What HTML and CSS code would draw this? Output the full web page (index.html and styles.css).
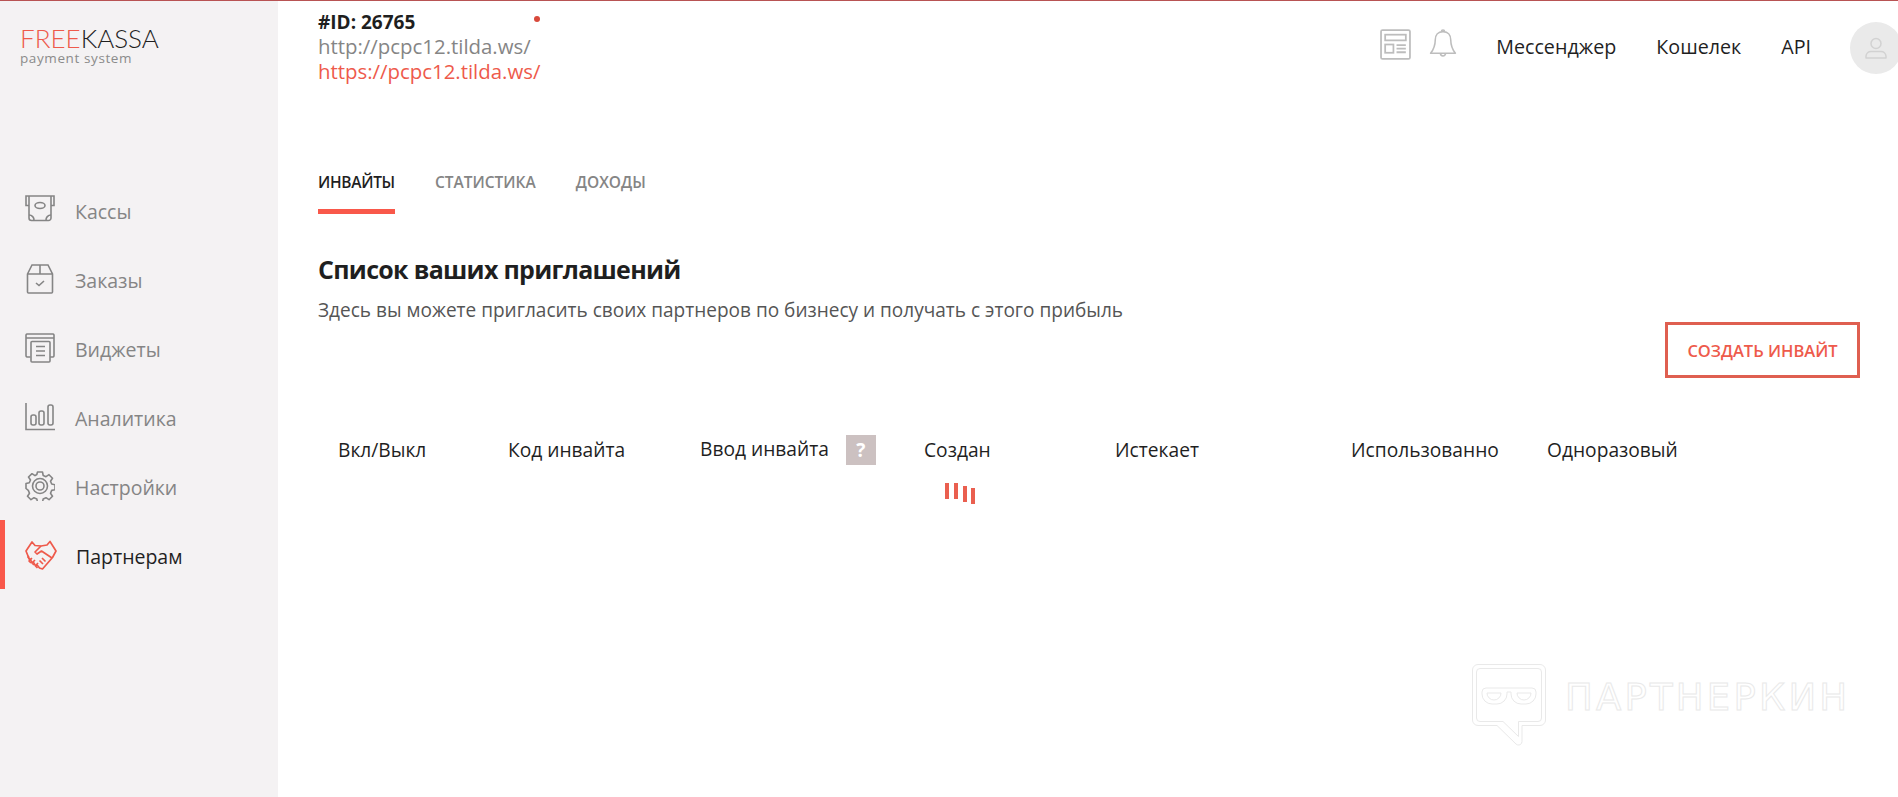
FILE: index.html
```html
<!DOCTYPE html>
<html lang="ru">
<head>
<meta charset="utf-8">
<title>FreeKassa</title>
<link rel="stylesheet" href="styles.css">
</head>
<body>
<div class="app">
  <aside class="sidebar">
    <div class="logo">
      <div class="logo-name"><span class="logo-free">FREE</span>KASSA</div>
      <div class="logo-sub">payment system</div>
    </div>
    <nav class="nav">
      <a class="nav-item">
        <svg class="nav-icon" viewBox="0 0 30 30" fill="none" stroke="#858585" stroke-width="1.6"><path d="M1 5V1h28v4M1 1v9.500h3M29 1v9.500h-3M4 1v22a2.500 2.500 0 0 0 2.500 2.500h17A2.500 2.500 0 0 0 26 23V1"/><ellipse cx="15" cy="10.500" rx="5" ry="3"/><path d="M4 20a5 5 0 0 1 5 5.500M26 20a5 5 0 0 0-5 5.500"/></svg>
        <span>Кассы</span>
      </a>
      <a class="nav-item">
        <svg class="nav-icon" viewBox="0 0 30 30" fill="none" stroke="#858585" stroke-width="1.6"><path d="M2.500 10 7 1h16l4.500 9v18a1 1 0 0 1-1 1h-23a1 1 0 0 1-1-1zM2.500 10h25M15 1v9"/><path d="M11 19l3 2.500 5-4.500"/></svg>
        <span>Заказы</span>
      </a>
      <a class="nav-item">
        <svg class="nav-icon" viewBox="0 0 30 30" fill="none" stroke="#858585" stroke-width="1.6"><path d="M5.500 24H2a1.500 1.500 0 0 1-1-1.500V2A1.500 1.500 0 0 1 2 1h26a1.500 1.500 0 0 1 1 1V22.500a1.500 1.500 0 0 1-1 1.500h-3M1 5h28"/><rect x="6" y="8.500" width="19" height="20.500" rx="1"/><path d="M11 13.500h9M11 18h9M11 22.500h9"/></svg>
        <span>Виджеты</span>
      </a>
      <a class="nav-item">
        <svg class="nav-icon" viewBox="0 0 30 30" fill="none" stroke="#858585" stroke-width="1.6"><path d="M1 1v26.500h29"/><rect x="6" y="13" width="5" height="10" rx="2"/><rect x="14" y="9" width="5" height="14" rx="2"/><rect x="23" y="3" width="5" height="20" rx="2"/></svg>
        <span>Аналитика</span>
      </a>
      <a class="nav-item">
        <svg class="nav-icon" viewBox="0 0 30 30" fill="none" stroke="#858585" stroke-width="1.6"><path d="M12.500 1h5l.7 3.500 2.800 1.200 3-2 3.500 3.500-2 3 1.200 2.800 3.300.7v5l-3.300.7-1.200 2.800 2 3-3.500 3.500-3-2-2.800 1.200-.7 3.300h-5l-.7-3.300-2.800-1.200-3 2-3.500-3.500 2-3-1.200-2.800L1 17.500v-5l3.300-.7 1.200-2.800-2-3L7 2.700l3 2 1.800-1.200z" stroke-linejoin="round"/><circle cx="15" cy="15" r="7.500"/><circle cx="15" cy="15" r="4"/></svg>
        <span>Настройки</span>
      </a>
      <a class="nav-item nav-item-active">
        <svg class="nav-icon nav-icon-hands" viewBox="0 0 32 30" fill="none" stroke="#ee5a4b" stroke-width="1.7" stroke-linejoin="round"><path d="M1 11 7 2l3 3.500 6 .5 6-1 3-3.500 6 9.500-3.500 6.500-10 11.500-3-1-2-2.500-2.500-.5-1.500-2.500-2-.5-1-2.500-1.500-1z"/><path d="M16 6 10 12l2 2 4.500-3 10.500 7M4 16l-1 1 2 3M7 18l-3 3 2 2M10 20l-3 3 2 2M13 23l-2.500 3 2 2M20.500 21.500 17 18M18 24l-3.500-3.500"/></svg>
        <span>Партнерам</span>
      </a>
    </nav>
  </aside>

  <main class="main">
    <header class="topbar">
      <div class="site">
        <div class="site-id">#ID: 26765</div>
        <div class="site-http">http://pcpc12.tilda.ws/</div>
        <div class="site-https">https://pcpc12.tilda.ws/</div>
        <span class="site-dot"></span>
      </div>
      <div class="top-right">
        <svg class="news-icon" viewBox="0 0 30 30" fill="none" stroke="#bdbdbd" stroke-width="1.700"><rect x="1" y="1" width="28" height="28" rx="1.500"/><rect x="5" y="5.500" width="20" height="5.500"/><rect x="5" y="15" width="8" height="8"/><path d="M16 15.500h9M16 19h9M16 22.500h9"/></svg>
        <svg class="bell-icon" viewBox="0 0 26 30" fill="none" stroke="#bdbdbd" stroke-width="1.500" stroke-linejoin="round"><path d="M13 3.500c-5 0-7.500 3.500-7.500 8 0 6-1.500 9-4.500 13h24c-3-4-4.500-7-4.500-13 0-4.500-2.500-8-7.500-8z"/><path d="M11.500 3.500a1.500 1.500 0 0 1 3 0M10.500 24.500a2.500 2.500 0 0 0 5 0"/></svg>
        <a class="top-link top-link-first">Мессенджер</a>
        <a class="top-link">Кошелек</a>
        <a class="top-link">API</a>
        <div class="avatar">
          <svg class="avatar-icon" viewBox="0 0 24 24" fill="none" stroke="#d2d2d2" stroke-width="1.500"><circle cx="12" cy="7.500" r="5"/><path d="M2 22v-2a5 5 0 0 1 5-4.500h10a5 5 0 0 1 5 4.500v2z" stroke-linejoin="round"/></svg>
        </div>
      </div>
    </header>

    <div class="tabs">
      <a class="tab tab-active">ИНВАЙТЫ</a>
      <a class="tab">СТАТИСТИКА</a>
      <a class="tab">ДОХОДЫ</a>
    </div>

    <section class="content">
      <h1 class="title">Список ваших приглашений</h1>
      <p class="lead">Здесь вы можете пригласить своих партнеров по бизнесу и получать с этого прибыль</p>
      <div class="actions"><button class="create-btn">СОЗДАТЬ ИНВАЙТ</button></div>
      <div class="thead">
        <div class="th">Вкл/Выкл</div>
        <div class="th">Код инвайта</div>
        <div class="th th-help"><span class="th-help-label">Ввод инвайта</span><span class="help">?</span></div>
        <div class="th">Создан</div>
        <div class="th">Истекает</div>
        <div class="th">Использованно</div>
        <div class="th">Одноразовый</div>
      </div>
      <div class="spinner"><i class="bar"></i><i class="bar"></i><i class="bar bar3"></i><i class="bar bar4"></i></div>
    </section>
  </main>
</div>

<div class="watermark">
  <svg class="wm-icon" viewBox="0 0 74 82" fill="none" stroke="#e9e9e9" stroke-width="1"><path d="M6 .5h62a5.500 5.500 0 0 1 5.500 5.500v50a5.500 5.500 0 0 1-5.500 5.500H50v16a3.500 3.500 0 0 1-6 2.500L25 61.500H6A5.500 5.500 0 0 1 .5 56V6A5.500 5.500 0 0 1 6 .5z"/><path d="M8 4.500h58a3.500 3.500 0 0 1 3.500 3.500v46a3.500 3.500 0 0 1-3.500 3.500H46.500v15L31 57.500H8A3.500 3.500 0 0 1 4.500 54V8A3.500 3.500 0 0 1 8 4.500z"/><path d="M14 24h46a4 4 0 0 1 4 4v2a10 10 0 0 1-10 10h-5a10 10 0 0 1-10-10v-2h-4v2a10 10 0 0 1-10 10h-5a10 10 0 0 1-10-10v-2a4 4 0 0 1 4-4z"/><path d="M15 29h14a7 7 0 0 1-7 7 7 7 0 0 1-7-7zM45 29h14a7 7 0 0 1-7 7 7 7 0 0 1-7-7z"/></svg>
  <span class="wm-text">ПАРТНЕРКИН</span>
</div>
</body>
</html>
```

FILE: styles.css
```css
* { box-sizing: border-box; }
html, body { margin: 0; height: 100%; overflow: hidden; background: #fff; }
body { font-family: "Open Sans", "Noto Sans", sans-serif; color: #1f1f1f; }
a { color: inherit; text-decoration: none; }

.app { display: flex; height: 797px; border-top: 1px solid #b85353; }

.sidebar { width: 278px; flex: none; background: #f4f2f3; }
.logo { padding: 24px 0 0 20px; height: 174px; }
.logo-name { font-family: "Lato", "Open Sans", sans-serif; font-weight: 300; font-size: 26px; line-height: 26px; color: #1f1f1f; }
.logo-free { color: #ee5a4b; }
.logo-sub { font-size: 13.5px; line-height: 14px; letter-spacing: .6px; color: #8b8b8b; }

.nav-item { display: flex; align-items: center; height: 69px; padding-left: 25px; font-size: 19.5px; color: #858585; }
.nav-item span { margin: 3px 0 0 20px; }
.nav-icon { width: 30px; height: 30px; flex: none; }
.nav-icon-hands { width: 32px; }
.nav-item-active { color: #1f1f1f; border-left: 5px solid #f9584a; padding-left: 20px; }
.nav-item-active span { margin-left: 19px; }

.main { flex: 1; min-width: 0; padding-left: 40px; }

.topbar { display: flex; justify-content: space-between; height: 138px; }
.site { position: relative; width: 240px; padding-top: 9px; font-size: 20.4px; line-height: 25px; color: #858585; }
.site-id { font-size: 19px; line-height: 24px; font-weight: 700; color: #1f1f1f; }
.site-http { white-space: nowrap; }
.site-https { white-space: nowrap; color: #ee5a4b; }
.site-dot { position: absolute; left: 216px; top: 15px; width: 6px; height: 6px; border-radius: 50%; background: #d8493b; }
.top-right { display: flex; align-items: flex-start; padding-top: 21px; }
.news-icon { width: 31px; height: 31px; margin-top: 7px; }
.bell-icon { width: 28px; height: 31px; margin: 6px 0 0 18px; }
.top-link { font-size: 19.7px; line-height: 24px; margin-left: 40px; margin-top: 13px; }
.top-link-first { margin-left: 39px; }
.avatar { width: 52px; height: 52px; margin: 0 -4px 0 39px; border-radius: 50%; background: #eaeaea; display: flex; align-items: center; justify-content: center; flex: none; }
.avatar-icon { width: 24px; height: 24px; }

.tabs { display: flex; gap: 40px; }
.tab { font-size: 15.5px; font-weight: 600; line-height: 22px; height: 75px; padding-top: 32px; color: #858585; }
.tab-active { color: #1f1f1f; border-bottom: 5px solid #f9584a; letter-spacing: -.3px; }

.title { margin: 0; padding-top: 37px; font-size: 25px; line-height: 36px; letter-spacing: -.7px; font-weight: 700; color: #1f1f1f; }
.lead { margin: 11px 0 0; font-size: 19.05px; line-height: 25px; color: #555; }

.actions { display: flex; justify-content: flex-end; padding-right: 38px; margin-top: -1px; }
.create-btn { width: 195px; height: 56px; background: #fff; border: 3px solid #df5f50; font: 600 16.5px "Open Sans", sans-serif; color: #ee5a4b; padding: 0; }

.thead { display: grid; grid-template-columns: 170px 192px 224px 191px 236px 196px 1fr; padding-left: 20px; margin-top: 57px; }
.th { font-size: 19.2px; line-height: 30px; font-weight: 500; color: #1f1f1f; }
.th-help { display: flex; align-items: flex-start; }
.th-help-label { margin-top: -1px; }
.help { width: 30px; height: 30px; margin-left: 17px; background: #ccc1c1; color: #fff; font-weight: 700; text-align: center; }

.spinner { height: 24px; margin-left: 627px; margin-top: 18px; display: flex; gap: 5px; }
.bar { display: block; width: 4px; height: 16px; background: #ea5f4f; }
.bar3 { margin-top: 3px; margin-right: -1px; }
.bar4 { margin-top: 5px; }

.watermark { position: absolute; left: 1472px; top: 664px; display: flex; gap: 19px; }
.wm-icon { width: 74px; height: 82px; flex: none; }
.wm-text { font-family: "DejaVu Sans", sans-serif; font-size: 37px; line-height: 34px; margin-top: 17px; letter-spacing: 3.2px; color: transparent; -webkit-text-stroke: 1px #e9e9e9; }
```
